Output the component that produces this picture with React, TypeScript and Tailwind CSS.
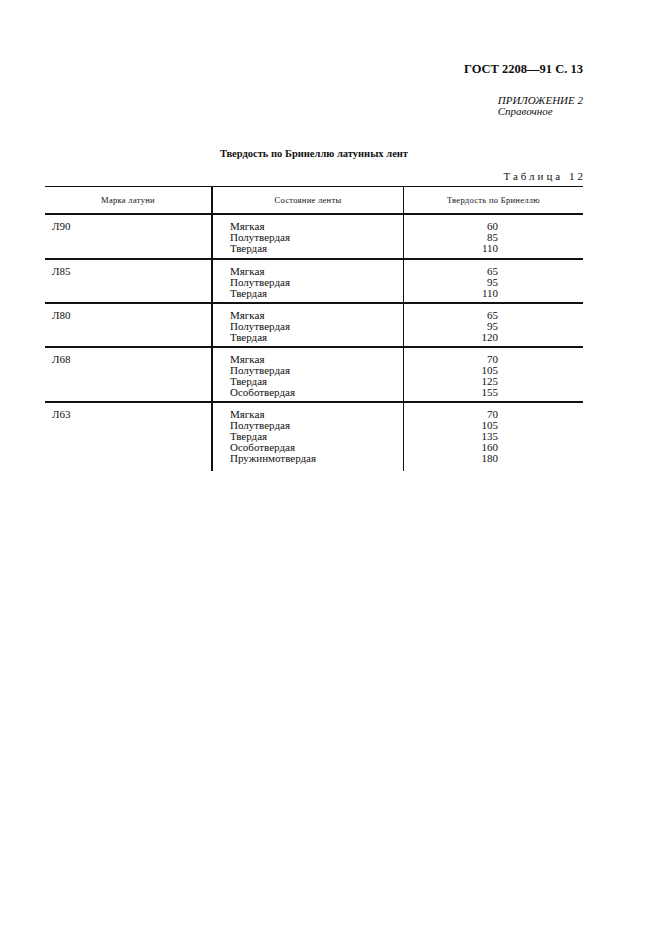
const rows = [
  { mark: "Л90", items: [["Мягкая", "60"], ["Полутвердая", "85"], ["Твердая", "110"]] },
  { mark: "Л85", items: [["Мягкая", "65"], ["Полутвердая", "95"], ["Твердая", "110"]] },
  { mark: "Л80", items: [["Мягкая", "65"], ["Полутвердая", "95"], ["Твердая", "120"]] },
  {
    mark: "Л68",
    items: [["Мягкая", "70"], ["Полутвердая", "105"], ["Твердая", "125"], ["Особотвердая", "155"]],
  },
  {
    mark: "Л63",
    items: [
      ["Мягкая", "70"],
      ["Полутвердая", "105"],
      ["Твердая", "135"],
      ["Особотвердая", "160"],
      ["Пружинмотвердая", "180"],
    ],
  },
];

export default function App() {
  return (
    <div className="w-[661px] h-[936px] bg-white text-[#111] font-['Liberation_Serif',serif] pl-[45px] pr-[78px] pt-[62px]">
      {/* Page header */}
      <div className="flex justify-end">
        <p className="text-[12.5px] font-bold leading-[14px]">ГОСТ 2208—91 С. 13</p>
      </div>
      <div className="flex justify-end mt-[19px]">
        <div className="text-[11px] italic leading-[11px]">
          <p>ПРИЛОЖЕНИЕ 2</p>
          <p>Справочное</p>
        </div>
      </div>

      <h2 className="mt-[31px] text-center text-[10.5px] font-bold leading-[12px]">
        Твердость по Бринеллю латунных лент
      </h2>

      <p className="mt-[10px] text-right text-[11px] leading-[12px] tracking-[3px] -mr-[3px]">Таблица 12</p>

      {/* Table */}
      <div className="mt-[4px]">
        <div className="grid grid-cols-[168px_191px_179px] border-t border-b-2 border-[#111] h-[29px] text-[8.5px] tracking-[0.3px]">
          <div className="flex items-center justify-center border-r-2 border-[#111]">Марка латуни</div>
          <div className="flex items-center justify-center border-r border-[#111]">Состояние ленты</div>
          <div className="flex items-center justify-center">Твердость по Бринеллю</div>
        </div>
        {rows.map((r, i) => (
          <div
            key={r.mark}
            className={
              "grid grid-cols-[168px_191px_179px] text-[11px] leading-[11px] " +
              (i < rows.length - 1 ? "border-b-2 border-[#111]" : "")
            }
          >
            <div className="border-r-2 border-[#111] pl-[7px] pt-[6px]">{r.mark}</div>
            <div
              className={
                "border-r border-[#111] pl-[17px] pt-[6px] " +
                (i === 0 ? "pb-[4px]" : i < rows.length - 1 ? "pb-[3px]" : "pb-[7px]")
              }
            >
              {r.items.map(([s]) => (
                <p key={s}>{s}</p>
              ))}
            </div>
            <div className="text-right pr-[85px] pt-[6px]">
              {r.items.map(([s, v]) => (
                <p key={s}>{v}</p>
              ))}
            </div>
          </div>
        ))}
      </div>
    </div>
  );
}
